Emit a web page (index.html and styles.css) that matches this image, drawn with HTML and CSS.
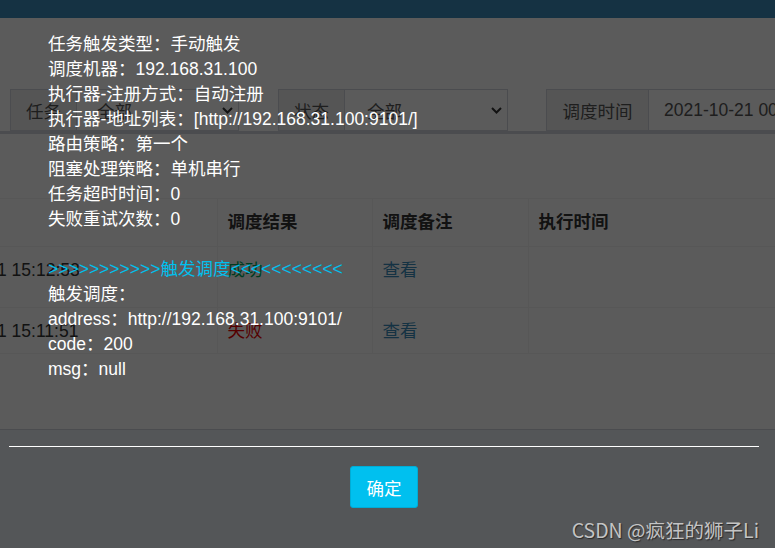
FILE: index.html
```html
<!DOCTYPE html>
<html lang="zh-CN">
<head>
<meta charset="utf-8">
<title>调度日志</title>
<link rel="stylesheet" href="styles.css">
</head>
<body>
<div class="page">
  <header class="topbar"></header>
  <main class="content">
    <section class="filter-box">
      <div class="filters">
        <div class="ig ig-job">
          <span class="addon">任务</span>
          <div class="select">全部<svg class="chev" width="11" height="7" viewBox="0 0 11 7"><path d="M1 1l4.5 4.5L10 1" fill="none" stroke="#333" stroke-width="2"/></svg></div>
        </div>
        <div class="ig ig-status">
          <span class="addon">状态</span>
          <div class="select">全部<svg class="chev" width="11" height="7" viewBox="0 0 11 7"><path d="M1 1l4.5 4.5L10 1" fill="none" stroke="#333" stroke-width="2"/></svg></div>
        </div>
        <div class="ig ig-time">
          <span class="addon addon-wide">调度时间</span>
          <div class="input">2021-10-21 00:00:00 - 2021-10-21 23:59:59</div>
        </div>
      </div>
    </section>
    <section class="table-box">
      <table class="log-table">
        <colgroup><col class="c1"><col class="c2"><col class="c3"><col class="c4"></colgroup>
        <thead>
          <tr><th></th><th>调度结果</th><th>调度备注</th><th>执行时间</th></tr>
        </thead>
        <tbody>
          <tr class="r1"><td><span class="time">1 15:12:53</span></td><td><span class="ok">成功</span></td><td><a class="link">查看</a></td><td></td></tr>
          <tr class="r2"><td><span class="time">1 15:11:51</span></td><td><span class="fail">失败</span></td><td><a class="link">查看</a></td><td></td></tr>
        </tbody>
      </table>
    </section>
  </main>
  <footer class="footer"></footer>
</div>

<div class="layer">
  <div class="layer-body">
    <div>任务触发类型：手动触发</div>
    <div>调度机器：192.168.31.100</div>
    <div>执行器-注册方式：自动注册</div>
    <div>执行器-地址列表：[http://192.168.31.100:9101/]</div>
    <div>路由策略：第一个</div>
    <div>阻塞处理策略：单机串行</div>
    <div>任务超时时间：0</div>
    <div>失败重试次数：0</div>
    <div class="blank"></div>
    <div class="trigger">&gt;&gt;&gt;&gt;&gt;&gt;&gt;&gt;&gt;&gt;&gt;触发调度&lt;&lt;&lt;&lt;&lt;&lt;&lt;&lt;&lt;&lt;&lt;</div>
    <div>触发调度：</div>
    <div>address：http://192.168.31.100:9101/</div>
    <div>code：200</div>
    <div>msg：null</div>
  </div>
  <div class="layer-rule"></div>
  <div class="layer-foot"><button class="btn-ok">确定</button></div>
</div>

<div class="watermark">CSDN @疯狂的狮子Li</div>
</body>
</html>
```

FILE: styles.css
```css
* { box-sizing: border-box; }
html, body { margin: 0; padding: 0; }
body {
  width: 775px;
  height: 548px;
  overflow: hidden;
  position: relative;
  background: #ecf0f5;
  font-family: "Liberation Sans", "Noto Sans CJK SC", sans-serif;
  font-size: 17.5px;
  color: #333;
}

.page { display: flex; flex-direction: column; height: 548px; }
.topbar { height: 18px; background: #3c8dbc; flex: none; }
.content { flex: none; display: flex; flex-direction: column; }

.filter-box {
  height: 116px;
  background: #fff;
  padding-top: 71px;
  border-bottom: 3px solid #d2d6de;
}
.filters { display: flex; padding-left: 10px; gap: 39px; overflow: hidden; white-space: nowrap; }
.ig { display: flex; height: 42px; flex: none; }
.ig-time { margin-left: -1px; }
.addon {
  width: 66px;
  display: flex; align-items: center; justify-content: center;
  background: #eee;
  border: 1px solid #d2d6de;
  border-right: none;
  color: #555;
}
.addon-wide { width: 102px; }
.select {
  width: 163px;
  border: 1px solid #d2d6de;
  display: flex; align-items: center;
  padding-left: 20px; padding-right: 5px;
  color: #555;
  background: #fff;
}
.ig-status .select { width: 164px; padding-left: 22px; }
.chev { margin-left: auto; }
.input {
  width: 260px;
  border: 1px solid #d2d6de;
  display: flex; align-items: center;
  padding-left: 15px;
  color: #555;
  background: #fff;
  overflow: hidden;
}

.table-box {
  height: 295px;
  background: #fff;
  padding-top: 64px;
}
.log-table {
  width: 775px;
  table-layout: fixed;
  border-collapse: collapse;
}
.c1 { width: 217px; }
.c2 { width: 155px; }
.c3 { width: 156px; }
.c4 { width: 247px; }
.log-table th, .log-table td {
  border: 1px solid #f4f4f4;
  padding: 0 0 0 10px;
  text-align: left;
  line-height: 25px;
}
.log-table th:first-child, .log-table td:first-child { border-left: none; padding-left: 0; }
.log-table th { height: 48px; font-weight: bold; vertical-align: middle; }
.log-table td { vertical-align: top; padding-top: 11px; }
.r1 td { height: 61px; }
.r2 td { height: 46px; }
.time { display: inline-block; margin-left: -3px; }
.ok { color: #00a65a; }
.fail { color: #e00; }
.link { color: #3c8dbc; }

.footer { flex: 1; border-top: 1px solid #d2d6de; background: #ecf0f5; }

.layer {
  position: absolute;
  inset: 0;
  background: rgba(0, 0, 0, 0.643);
  color: #fff;
  display: flex;
  flex-direction: column;
}
.layer-body {
  height: 446px;
  padding: 32px 0 0 48px;
  line-height: 25px;
}
.blank { height: 25px; }
.trigger { color: #00c0ef; }
.layer-rule { height: 1px; background: #fff; margin: 0 16px 0 9px; }
.layer-foot {
  margin: 0 16px 0 9px;
  padding-top: 19px;
  display: flex; justify-content: center;
}
.btn-ok {
  width: 68px; height: 42px;
  background: #00c0ef;
  border: 1px solid #00acd6;
  border-radius: 3px;
  color: #fff;
  font-family: "Liberation Sans", "Noto Sans CJK SC", sans-serif;
  font-size: 17.5px;
  padding: 0;
}

.watermark {
  position: absolute;
  right: 16px;
  bottom: 6px;
  font-family: "Noto Sans CJK SC", sans-serif;
  font-size: 19.5px;
  line-height: 24px;
  color: #c4c4c4;
  text-shadow: 1px 1px 1px #2a2a2a;
}
```
